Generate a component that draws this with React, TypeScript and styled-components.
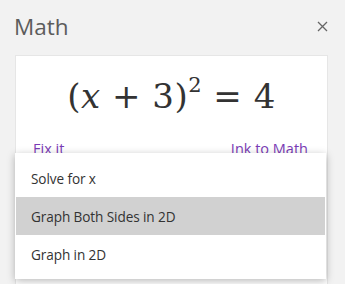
import React from "react";
import styled, { createGlobalStyle } from "styled-components";

const Global = createGlobalStyle`
  html, body { margin: 0; padding: 0; background: #f2f2f2; }
  body { width: 345px; height: 284px; overflow: hidden; font-family: "Open Sans", "Noto Sans", sans-serif; }
`;

const Pane = styled.div`
  position: relative;
  width: 345px;
  height: 284px;
  background: #f2f2f2;
  overflow: hidden;
`;

const Header = styled.div`
  display: flex;
  align-items: center;
  justify-content: space-between;
  height: 55px;
  padding: 0 17px 0 14px;
  box-sizing: border-box;
`;

const Title = styled.h1`
  margin: 0;
  font-size: 22.5px;
  font-weight: 400;
  color: #5c5c5c;
  line-height: 1;
`;

const Close = styled.button`
  border: none;
  background: none;
  padding: 0;
  width: 12px;
  height: 12px;
  display: flex;
  align-items: center;
  justify-content: center;
  margin-bottom: 2px;
`;

const Card = styled.div`
  margin: 0 17px 0 15px;
  background: #fff;
  border: 1px solid #e6e6e6;
  border-bottom: none;
  height: 240px;
  display: flex;
  flex-direction: column;
`;

const Equation = styled.div`
  font-family: "DejaVu Serif", "Liberation Serif", serif;
  font-size: 34px;
  color: #333;
  text-align: center;
  padding-top: 20px;
  height: 55px;
  white-space: nowrap;
  letter-spacing: 0.5px;
`;

const Var = styled.i`
  font-style: italic;
`;

const Sup = styled.sup`
  font-size: 21px;
  vertical-align: 16px;
  line-height: 0;
`;

const Links = styled.div`
  display: flex;
  justify-content: space-between;
  padding: 0 19px 0 17px;
  margin-top: 8px;
`;

const Link = styled.a`
  font-size: 14.5px;
  color: #7a3bb5;
  text-decoration: none;
`;

const Grid = styled.div`
  margin-top: auto;
  height: 10px;
  background-image: repeating-linear-gradient(90deg, #d6d6d6 0 1px, transparent 1px 19px);
  border-top: 1px solid #d0d0d0;
`;

const Menu = styled.ul`
  position: absolute;
  left: 15px;
  top: 153px;
  width: 311px;
  margin: 0;
  padding: 6px 0;
  list-style: none;
  background: #fff;
  box-shadow: 0 2px 8px rgba(0, 0, 0, 0.28);
  box-sizing: border-box;
`;

const Item = styled.li<{ $active?: boolean }>`
  height: 38px;
  display: flex;
  align-items: center;
  padding-left: 15px;
  margin: 0 1px;
  font-size: 13.6px;
  letter-spacing: -0.1px;
  color: #333;
  background: ${(p) => (p.$active ? "#d1d1d1" : "transparent")};
`;

export default function App() {
  return (
    <>
      <Global />
      <Pane>
        <Header>
          <Title>Math</Title>
          <Close aria-label="Close">
            <svg width="11" height="11" viewBox="0 0 11 11">
              <path d="M1 1L10 10M10 1L1 10" stroke="#666" strokeWidth="1.3" />
            </svg>
          </Close>
        </Header>
        <Card>
          <Equation>
            (<Var>x</Var> + 3)<Sup>2</Sup> = 4
          </Equation>
          <Links>
            <Link>Fix it</Link>
            <Link>Ink to Math</Link>
          </Links>
          <Grid />
        </Card>
        <Menu>
          <Item>Solve for x</Item>
          <Item $active>Graph Both Sides in 2D</Item>
          <Item>Graph in 2D</Item>
        </Menu>
      </Pane>
    </>
  );
}
